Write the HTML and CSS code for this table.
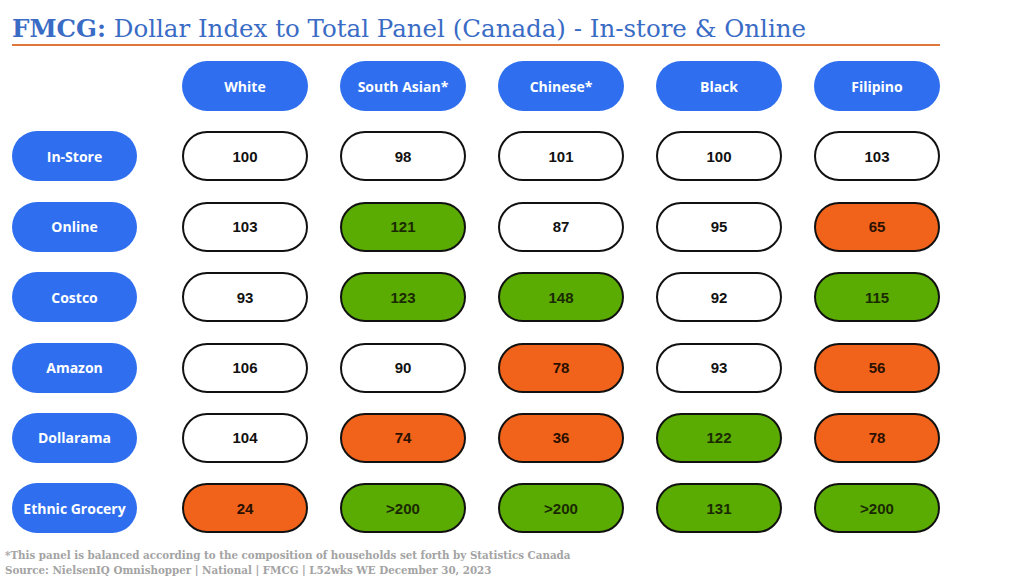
FILE: index.html
```html
<!DOCTYPE html>
<html>
<head>
<meta charset="utf-8">
<link rel="stylesheet" href="styles.css">
</head>
<body>
<div class="page">
  <h1 class="title"><b>FMCG:</b> Dollar Index to Total Panel (Canada) - In-store &amp; Online</h1>
  <div class="grid">
    <div class="corner"></div>
    <div class="pill head">White</div>
    <div class="pill head">South Asian*</div>
    <div class="pill head">Chinese*</div>
    <div class="pill head">Black</div>
    <div class="pill head">Filipino</div>

    <div class="pill head label">In-Store</div>
    <div class="pill val">100</div>
    <div class="pill val">98</div>
    <div class="pill val">101</div>
    <div class="pill val">100</div>
    <div class="pill val">103</div>

    <div class="pill head label">Online</div>
    <div class="pill val">103</div>
    <div class="pill val green">121</div>
    <div class="pill val">87</div>
    <div class="pill val">95</div>
    <div class="pill val orange">65</div>

    <div class="pill head label">Costco</div>
    <div class="pill val">93</div>
    <div class="pill val green">123</div>
    <div class="pill val green">148</div>
    <div class="pill val">92</div>
    <div class="pill val green">115</div>

    <div class="pill head label">Amazon</div>
    <div class="pill val">106</div>
    <div class="pill val">90</div>
    <div class="pill val orange">78</div>
    <div class="pill val">93</div>
    <div class="pill val orange">56</div>

    <div class="pill head label">Dollarama</div>
    <div class="pill val">104</div>
    <div class="pill val orange">74</div>
    <div class="pill val orange">36</div>
    <div class="pill val green">122</div>
    <div class="pill val orange">78</div>

    <div class="pill head label">Ethnic Grocery</div>
    <div class="pill val orange">24</div>
    <div class="pill val green">&gt;200</div>
    <div class="pill val green">&gt;200</div>
    <div class="pill val green">131</div>
    <div class="pill val green">&gt;200</div>
  </div>
  <div class="foot">
    <p>*This panel is balanced according to the composition of households set forth by Statistics Canada</p>
    <p>Source: NielsenIQ Omnishopper | National | FMCG | L52wks WE December 30, 2023</p>
  </div>
</div>
</body>
</html>
```
FILE: styles.css
```css
html, body {
  margin: 0;
  padding: 0;
  background: #ffffff;
}
.page {
  width: 1024px;
  height: 576px;
  overflow: hidden;
  position: relative;
}
.title {
  margin: 0 0 0 12px;
  width: 928px;
  padding-top: 14px;
  height: 30px;
  border-bottom: 2px solid #e0773a;
  font-family: "DejaVu Serif", Georgia, serif;
  font-weight: normal;
  font-size: 24.5px;
  line-height: 30px;
  color: #3a6cc6;
  white-space: nowrap;
}
.title b {
  font-weight: bold;
}
.grid {
  display: grid;
  grid-template-columns: 138px repeat(5, 126px);
  grid-auto-rows: 50px;
  column-gap: 32px;
  row-gap: 20.4px;
  margin: 15px 0 0 12px;
}
.pill {
  border-radius: 25px;
  display: flex;
  align-items: center;
  justify-content: center;
  box-sizing: border-box;
  height: 50px;
  font-size: 14px;
}
.head {
  background: #2f6fef;
  color: #ffffff;
  font-family: "Open Sans", "Noto Sans", sans-serif;
  font-weight: 700;
  font-size: 14px;
}
.label {
  width: 125px;
}
.val {
  border: 2px solid #111111;
  background: #ffffff;
  color: #111111;
  font-family: "Liberation Sans", Arial, sans-serif;
  font-weight: 700;
  font-size: 15px;
}
.green {
  background: #5aab02;
  color: #1a2a00;
}
.orange {
  background: #f1631b;
  color: #2a1000;
}
.foot {
  position: absolute;
  left: 5px;
  top: 548px;
  font-family: "DejaVu Serif", Georgia, serif;
  font-weight: bold;
  font-size: 10.3px;
  line-height: 15px;
  color: #a3a3a3;
}
.foot p {
  margin: 0;
  white-space: nowrap;
}
```
